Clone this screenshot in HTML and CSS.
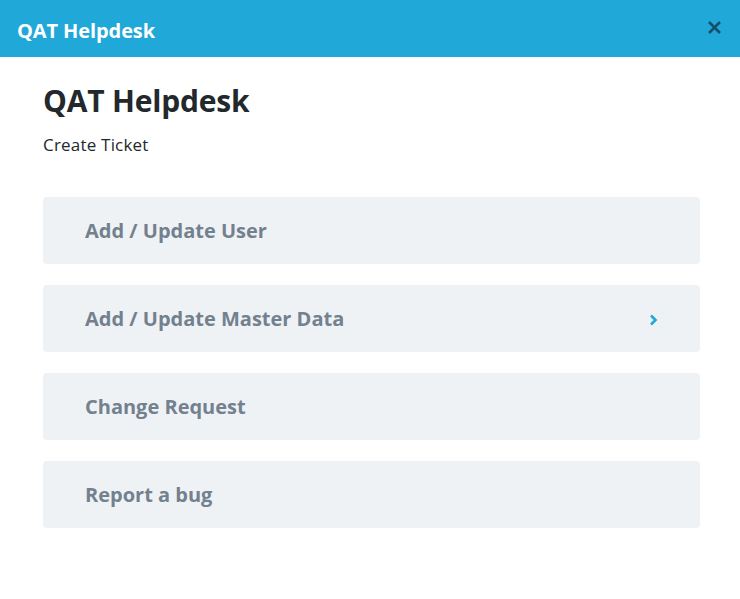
FILE: index.html
```html
<!DOCTYPE html>
<html lang="en">
    <head>
        <meta charset="UTF-8" />
        <meta name="viewport" content="width=device-width, initial-scale=1.0" />
        <title>QAT Helpdesk</title>
        <link rel="stylesheet" href="styles.css">
    </head>
    <body>
        <div class="modal">
            <div class="modal-header">
                <span class="modal-title">QAT Helpdesk</span>
                <button class="close" aria-label="Close">
                    <svg width="15" height="15" viewBox="0 0 15 15">
                        <path d="M2 2 L13 13 M13 2 L2 13" stroke="#15506a" stroke-width="2.6" fill="none" />
                    </svg>
                </button>
            </div>
            <div class="modal-body">
                <h1>QAT Helpdesk</h1>
                <p class="subtitle">Create Ticket</p>
                <div class="list">
                    <div class="item"><span class="text">Add / Update User</span></div>
                    <div class="item">
                        <span class="text">Add / Update Master Data</span>
                        <svg class="chevron" width="9" height="12" viewBox="0 0 9 12">
                            <path d="M2 1.5 L6.5 6 L2 10.5" stroke="#20a8d8" stroke-width="2.6" fill="none" />
                        </svg>
                    </div>
                    <div class="item"><span class="text">Change Request</span></div>
                    <div class="item"><span class="text">Report a bug</span></div>
                </div>
            </div>
        </div>
    </body>
</html>
```

FILE: styles.css
```css
* {
    padding: 0;
    margin: 0;
    box-sizing: border-box;
}
body {
    font-family: "Open Sans", "Noto Sans", sans-serif;
    background-color: #fff;
    color: #23282c;
}
.modal-header {
    height: 57px;
    background-color: #20a8d8;
    display: flex;
    align-items: center;
    justify-content: space-between;
    padding: 0 18px 0 17px;
}
.modal-title {
    color: #fff;
    font-size: 20px;
    font-weight: 700;
    letter-spacing: -0.1px;
    margin-top: 4px;
}
.close {
    all: unset;
    display: flex;
    cursor: pointer;
    margin-top: -3px;
}
.modal-body {
    padding: 24px 40px 0 43px;
}
h1 {
    font-size: 30px;
    font-weight: 700;
    line-height: 40px;
    letter-spacing: -0.2px;
}
.subtitle {
    font-size: 17px;
    line-height: 24px;
    margin-top: 12px;
    letter-spacing: 0.2px;
}
.list {
    display: flex;
    flex-direction: column;
    gap: 21px;
    margin-top: 40px;
}
.item {
    height: 67px;
    background-color: #eff2f5;
    border-radius: 4px;
    display: flex;
    align-items: center;
    justify-content: space-between;
    padding: 0 42px 0 42px;
    cursor: pointer;
}
.chevron {
    margin-top: 2px;
}
.text {
    font-size: 20px;
    font-weight: 700;
    color: #73818f;
    letter-spacing: 0;
}
```
